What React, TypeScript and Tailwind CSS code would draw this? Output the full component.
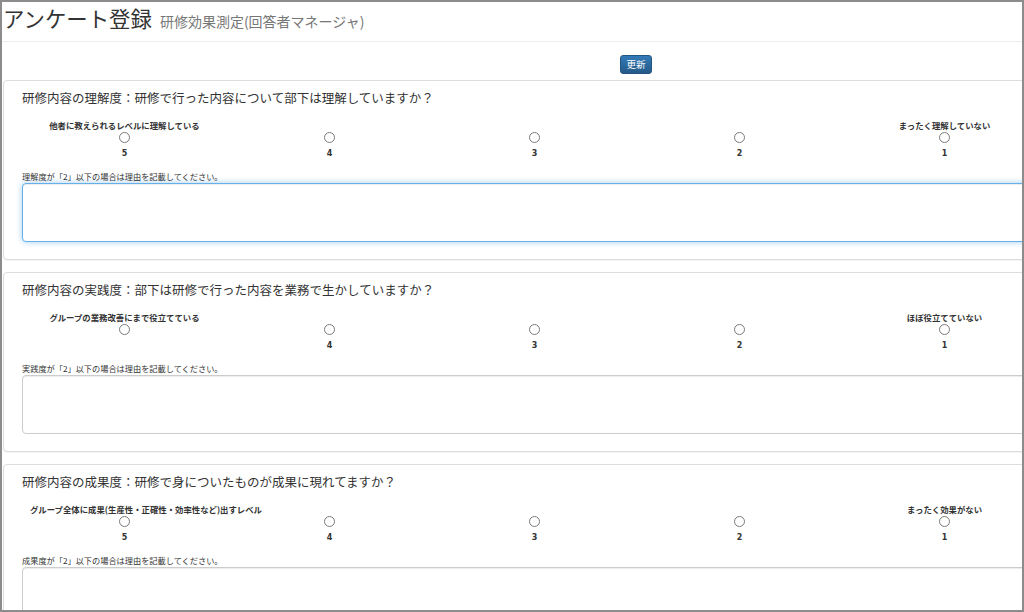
import { useState } from "react";

// Survey registration screen: three rating questions, each with a
// 5-to-1 radio scale and a free-text reason box.

interface Question {
  id: string;
  title: string;
  high: string;
  low: string;
  hint: string;
  hideFive?: boolean;
}

const QUESTIONS: Question[] = [
  {
    id: "understanding",
    title: "研修内容の理解度：研修で行った内容について部下は理解していますか？",
    high: "他者に教えられるレベルに理解している",
    low: "まったく理解していない",
    hint: "理解度が「2」以下の場合は理由を記載してください。",
  },
  {
    id: "practice",
    title: "研修内容の実践度：部下は研修で行った内容を業務で生かしていますか？",
    high: "グループの業務改善にまで役立てている",
    low: "ほぼ役立てていない",
    hint: "実践度が「2」以下の場合は理由を記載してください。",
    hideFive: true,
  },
  {
    id: "result",
    title: "研修内容の成果度：研修で身についたものが成果に現れてますか？",
    high: "グループ全体に成果(生産性・正確性・効率性など)出すレベル",
    low: "まったく効果がない",
    hint: "成果度が「2」以下の場合は理由を記載してください。",
  },
];

const SCALE = [5, 4, 3, 2, 1];

function QuestionPanel({ q, focused }: { q: Question; focused?: boolean }) {
  const [value, setValue] = useState<number | null>(null);

  return (
    <div className="mt-[12px] first:mt-0 w-[1063px] rounded-[4px] border border-[#dddddd] bg-white px-[18px] pt-[8px] pb-[17px] shadow-[0_1px_1px_rgba(0,0,0,0.05)]">
      {/* Question */}
      <div className="h-[18px] text-[12.5px] leading-[18px] text-[#333333] whitespace-nowrap">
        {q.title}
      </div>

      {/* Scale */}
      <div className="mt-[12px] grid grid-cols-5">
        {SCALE.map((n) => (
          <div key={n} className="px-2 text-center">
            <div className="h-[12px] whitespace-nowrap text-[8.4px] font-bold leading-[12px] text-[#333333]">
              {n === 5 ? q.high : n === 1 ? q.low : ""}
            </div>
            <input
              type="radio"
              name={q.id}
              checked={value === n}
              onChange={() => setValue(n)}
              className="mx-auto mt-[1px] block h-[11px] w-[11px] appearance-none rounded-full border border-[#7a7a7a] bg-white checked:border-[3px] checked:border-[#337ab7]"
            />
            <div className="mt-[5px] h-[12px] font-['DejaVu_Sans',sans-serif] text-[8px] font-bold leading-[12px] text-[#333333]">
              {n === 5 && q.hideFive ? "" : n}
            </div>
          </div>
        ))}
      </div>

      {/* Reason */}
      <div className="mt-[10px] h-[12px] whitespace-nowrap text-[8.2px] leading-[12px] text-[#333333]">
        {q.hint}
      </div>
      <textarea
        className={
          focused
            ? "mt-[1px] block h-[59px] w-full resize-none rounded-[4px] border border-[#66afe9] bg-white px-2 py-1 text-[10px] outline-none shadow-[inset_0_1px_1px_rgba(0,0,0,0.075),0_0_6px_rgba(102,175,233,0.6)]"
            : "mt-[1px] block h-[59px] w-full resize-none rounded-[4px] border border-[#cccccc] bg-white px-2 py-1 text-[10px] outline-none shadow-[inset_0_1px_1px_rgba(0,0,0,0.075)]"
        }
      />
    </div>
  );
}

export default function App() {
  return (
    <div className="h-[612px] w-[1024px] overflow-hidden border-2 border-[#8c8c8c] bg-white font-['Noto_Sans_CJK_JP','Noto_Sans',sans-serif] text-[#333333]">
      {/* Header */}
      <div className="flex h-[40px] w-[1100px] items-baseline border-b border-[#eeeeee] pl-[1px] pt-[1px]">
        <h1 className="text-[21.4px] font-normal leading-[30px] text-[#333333]">
          アンケート登録
        </h1>
        <span className="ml-[8px] text-[14px] leading-[30px] text-[#777777]">
          研修効果測定(回答者マネージャ)
        </span>
      </div>

      {/* Actions */}
      <div className="flex h-[38px] items-start pt-[13px] pl-[618px]">
        <button className="flex h-[19px] w-[32px] items-center justify-center rounded-[3px] border border-[#245580] bg-gradient-to-b from-[#337ab7] to-[#265a88] text-[9.5px] leading-none text-white">
          更新
        </button>
      </div>

      {/* Questions */}
      <div className="ml-[1px]">
        {QUESTIONS.map((q, i) => (
          <QuestionPanel key={q.id} q={q} focused={i === 0} />
        ))}
      </div>
    </div>
  );
}
